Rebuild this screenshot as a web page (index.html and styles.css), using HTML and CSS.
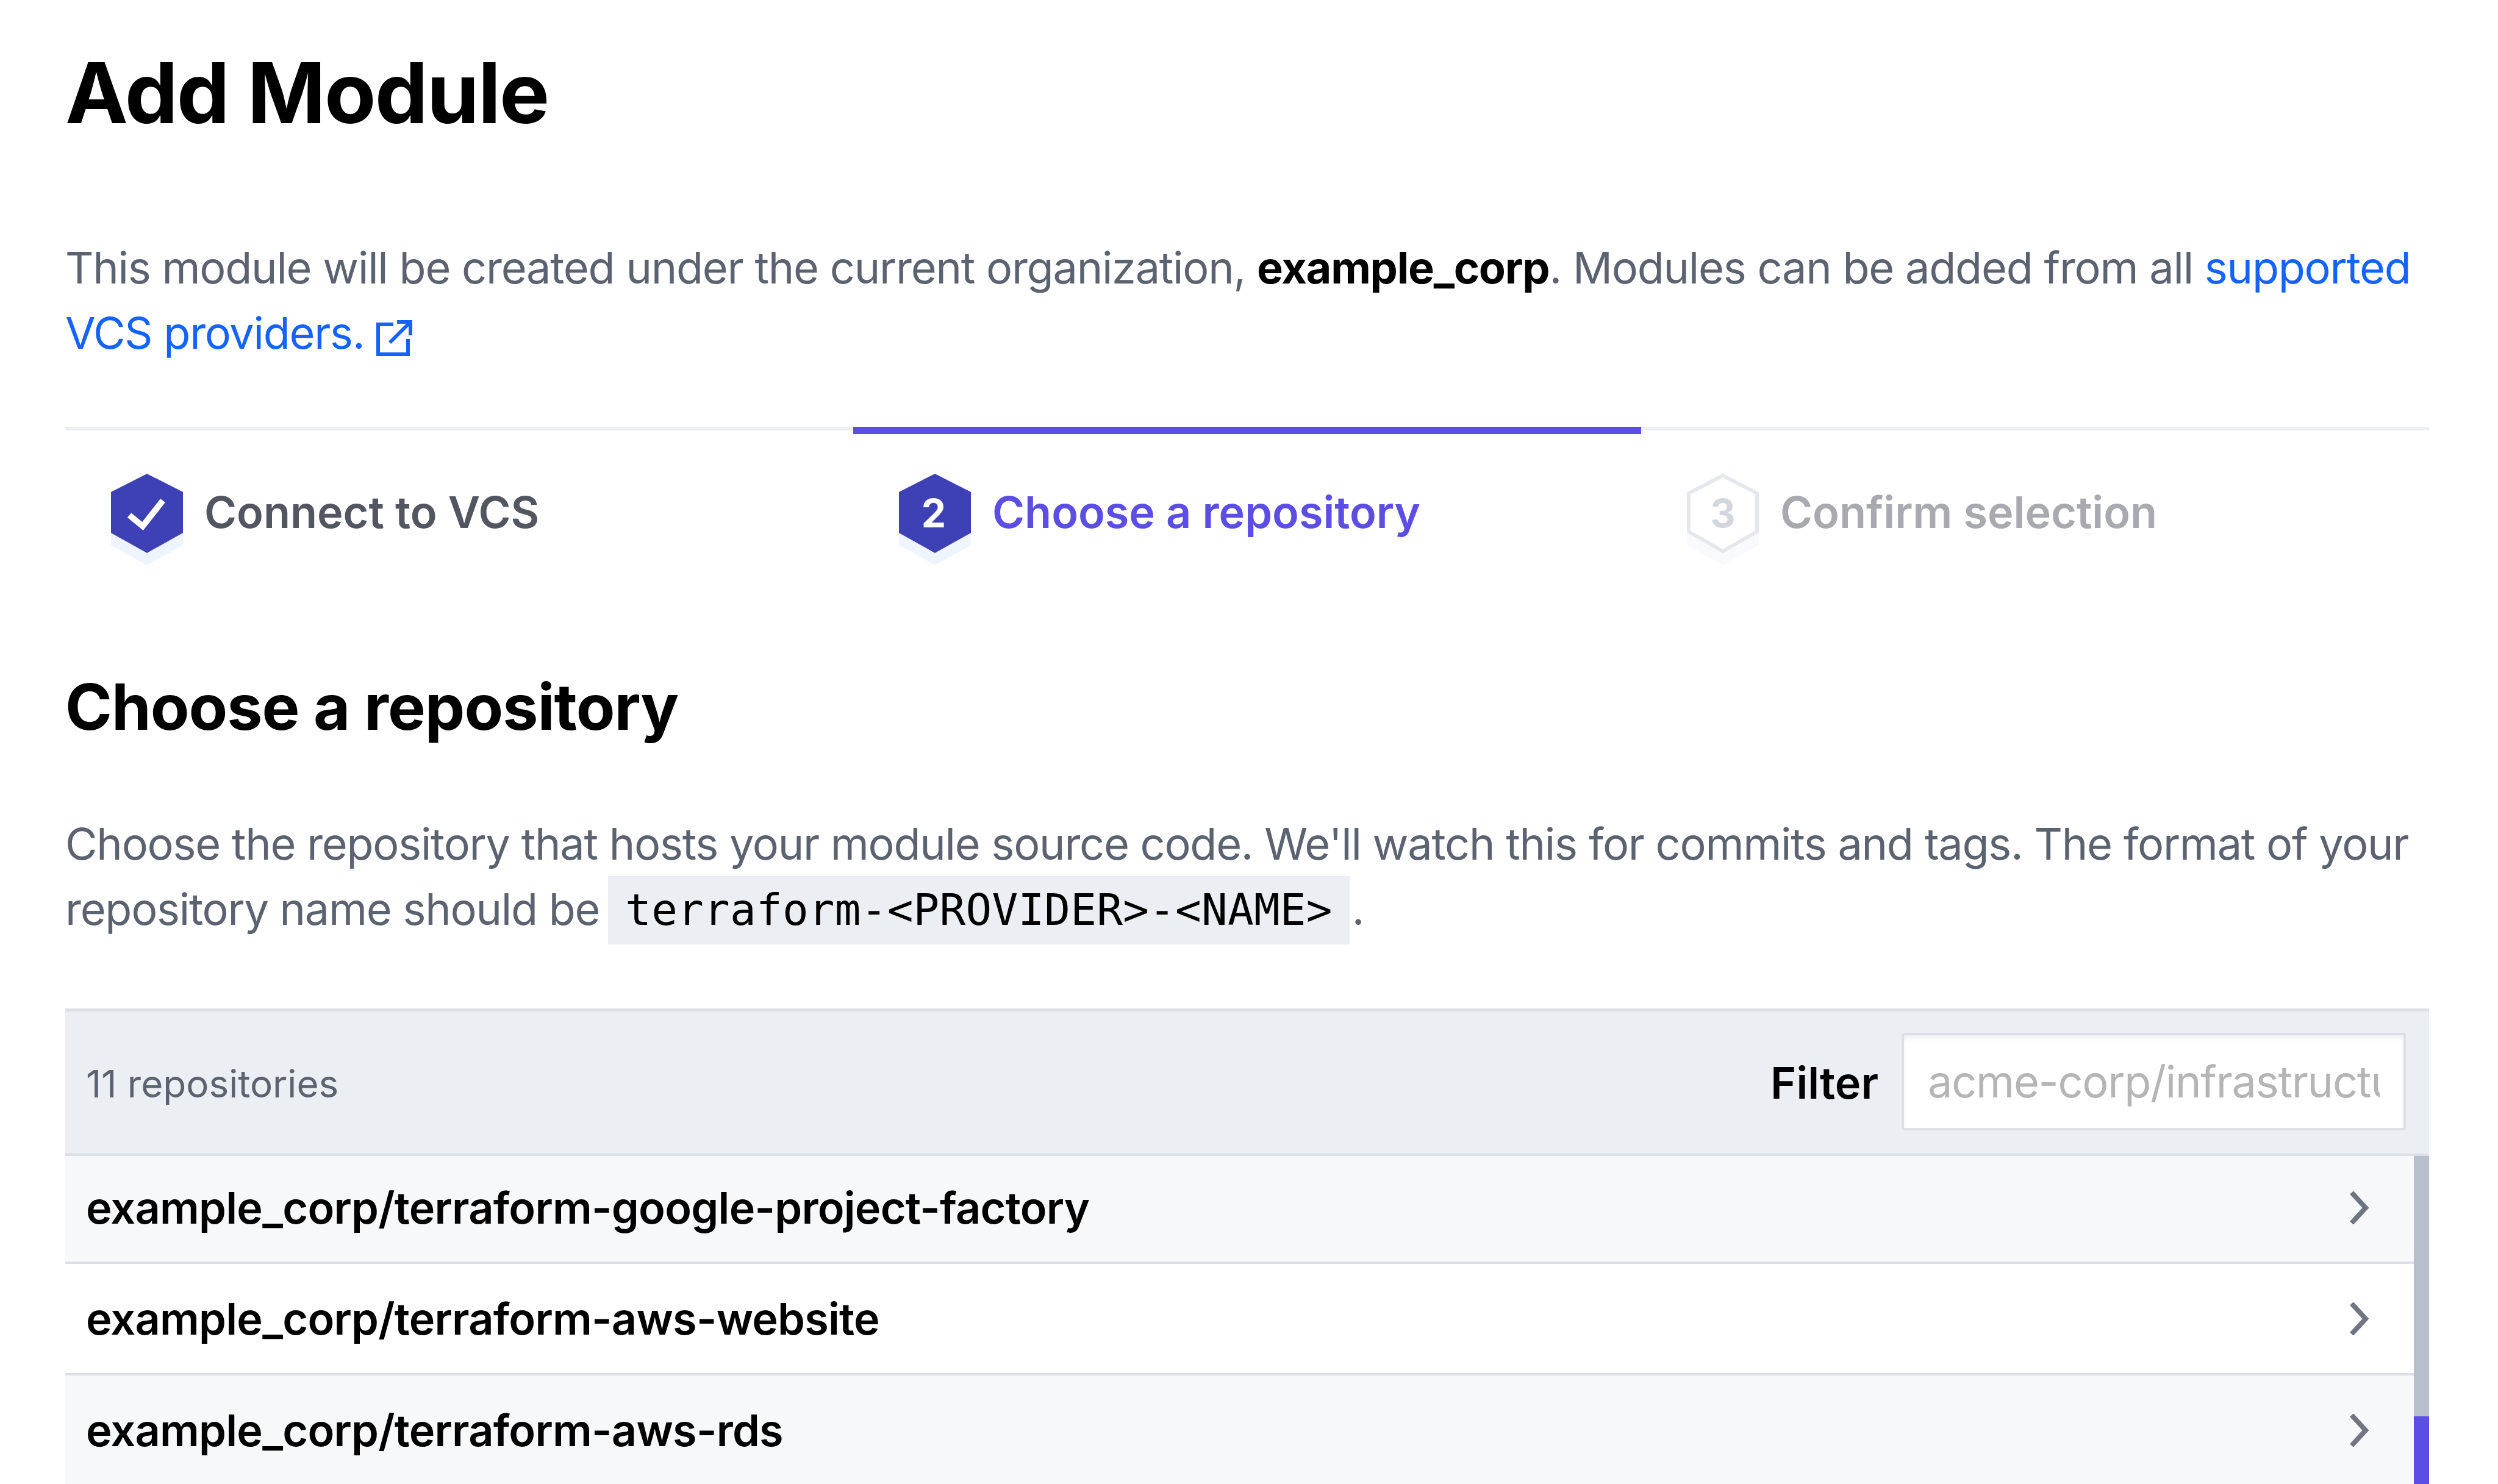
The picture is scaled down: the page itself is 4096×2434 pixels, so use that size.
FILE: index.html
```html
<!DOCTYPE html>
<html lang="en">
<head>
    <meta charset="UTF-8">
    <meta name="viewport" content="width=device-width, initial-scale=1.0">
    <title>Add Module</title>
    <link rel="stylesheet" href="styles.css">
</head>
<body>
    <div class="container">
        <h1>Add Module</h1>
        <p class="intro">This module will be created under the current organization, <strong>example_corp</strong>. Modules can be added from all <a href="#">supported VCS providers.<svg class="ext-icon" viewBox="0 0 60 60" fill="none" stroke="#1563ff" stroke-width="6"><path d="M28 8H3v49h49V32"/><path d="M22 38L55 5"/><path d="M34 4h22v22"/></svg></a></p>

        <div class="steps">
            <div class="step step-done">
                <svg class="hex" viewBox="0 0 118 150">
                    <path class="hex-shadow" d="M0 50L59 20l59 30v67l-59 33-59-33z"/>
                    <path class="hex-fill" d="M0 30L59 0l59 30v67l-59 33-59-33z"/>
                    <path d="M30 68l22 18 33-42" fill="none" stroke="#fff" stroke-width="10"/>
                </svg>
                <span class="step-label">Connect to VCS</span>
            </div>
            <div class="step step-active">
                <svg class="hex" viewBox="0 0 118 150">
                    <path class="hex-shadow" d="M0 50L59 20l59 30v67l-59 33-59-33z"/>
                    <path class="hex-fill" d="M0 30L59 0l59 30v67l-59 33-59-33z"/>
                    <text class="hex-num" x="57" y="88" fill="#fff">2</text>
                </svg>
                <span class="step-label">Choose a repository</span>
            </div>
            <div class="step step-todo">
                <svg class="hex" viewBox="0 0 118 150">
                    <path class="hex-shadow-light" d="M0 50L59 20l59 30v67l-59 33-59-33z"/>
                    <path class="hex-outline" d="M3 32L59 3l56 29v63l-56 32-56-32z"/>
                    <text class="hex-num" x="59" y="88" fill="#d3d7dd">3</text>
                </svg>
                <span class="step-label">Confirm selection</span>
            </div>
        </div>

        <h2>Choose a repository</h2>
        <p class="desc">Choose the repository that hosts your module source code. We'll watch this for commits and tags. The format of your repository name should be <code>terraform-&lt;PROVIDER&gt;-&lt;NAME&gt;</code>.</p>

        <div class="repo-table">
            <div class="repo-head">
                <span class="repo-count">11 repositories</span>
                <label class="filter-label" for="filter">Filter</label>
                <input class="filter-input" id="filter" type="text" placeholder="acme-corp/infrastructure">
            </div>
            <div class="repo-body">
                <div class="repo-list">
                    <div class="repo-row repo-row-alt">
                        <span>example_corp/terraform-google-project-factory</span>
                        <svg class="chevron" viewBox="0 0 32 54" fill="none" stroke="#6f7682" stroke-width="8"><path d="M4 2l23 25L4 52"/></svg>
                    </div>
                    <div class="repo-row">
                        <span>example_corp/terraform-aws-website</span>
                        <svg class="chevron" viewBox="0 0 32 54" fill="none" stroke="#6f7682" stroke-width="8"><path d="M4 2l23 25L4 52"/></svg>
                    </div>
                    <div class="repo-row repo-row-alt">
                        <span>example_corp/terraform-aws-rds</span>
                        <svg class="chevron" viewBox="0 0 32 54" fill="none" stroke="#6f7682" stroke-width="8"><path d="M4 2l23 25L4 52"/></svg>
                    </div>
                </div>
                <div class="scrollbar">
                    <div class="scroll-track"></div>
                    <div class="scroll-thumb"></div>
                </div>
            </div>
        </div>
    </div>
</body>
</html>
```

FILE: styles.css
```css
html, body {
    height: 2434px;
    overflow: hidden;
}

body {
    font-family: Inter, "Noto Sans", sans-serif;
    background-color: #fff;
    color: #000;
    margin: 0;
}

.container {
    padding: 72px 113px 0 107px;
}

h1 {
    margin: 0;
    font-size: 138px;
    line-height: 160px;
    font-weight: 700;
    letter-spacing: -2px;
}

.intro {
    margin: 153px 0 0;
    font-size: 72px;
    line-height: 107px;
    letter-spacing: -1.25px;
    color: #5c6370;
}

.intro strong {
    color: #000;
    font-weight: 700;
}

.intro a {
    color: #1563ff;
    text-decoration: none;
}

.ext-icon {
    width: 60px;
    height: 60px;
    margin-left: 20px;
    vertical-align: -12px;
}

.steps {
    display: grid;
    grid-template-columns: repeat(3, 1fr);
    margin-top: 101px;
    border-top: 6px solid #ebeef2;
}

.step {
    display: flex;
    align-items: flex-start;
    gap: 35px;
    height: 290px;
    padding: 65px 0 0 75px;
    box-sizing: border-box;
    margin-top: -6px;
    border-top: 12px solid transparent;
}

.step-active {
    border-top-color: #5c4ee5;
}

.hex {
    width: 118px;
    height: 150px;
    flex-shrink: 0;
}

.hex-fill {
    fill: #3e40b5;
}

.hex-shadow {
    fill: #eff5fe;
}

.hex-shadow-light {
    fill: #f8fafe;
}

.hex-outline {
    fill: #fff;
    stroke: #e4e8ed;
    stroke-width: 6;
}

.hex-num {
    font-size: 64px;
    font-weight: 700;
    text-anchor: middle;
}

.step-label {
    font-size: 72px;
    line-height: 126px;
    font-weight: 600;
}

.step-done .step-label {
    color: #525661;
}

.step-active .step-label {
    color: #5c4ee5;
}

.step-todo .step-label {
    color: #a8aab0;
}

h2 {
    margin: 104px 0 0;
    font-size: 104px;
    line-height: 130px;
    font-weight: 700;
    letter-spacing: -1px;
}

.desc {
    margin: 106px 0 0;
    font-size: 72px;
    line-height: 107px;
    letter-spacing: -1.27px;
    color: #5c6370;
}

.desc code {
    display: inline-block;
    height: 112px;
    line-height: 112px;
    margin: -4px 4px -2px -5px;
    padding: 0 28px;
    font-family: "DejaVu Sans Mono", monospace;
    font-size: 71px;
    letter-spacing: 0.2px;
    color: #000;
    background: #ebeef2;
}

.repo-table {
    margin-top: 107px;
}

.repo-head {
    display: flex;
    align-items: center;
    height: 242px;
    box-sizing: border-box;
    padding: 0 38px 0 34px;
    background: #ebeef2;
    border-top: 5px solid #dce0e6;
    border-bottom: 4px solid #dce0e6;
}

.repo-count {
    flex: 1;
    margin-top: 4px;
    font-size: 62px;
    color: #5c6370;
}

.filter-label {
    font-size: 72px;
    font-weight: 600;
    margin-right: 38px;
}

.filter-input {
    width: 827px;
    height: 160px;
    margin-top: -4px;
    box-sizing: border-box;
    padding: 0 39px;
    font-family: inherit;
    font-size: 72px;
    letter-spacing: -1.25px;
    background: #fff;
    border: 4px solid #dce0e6;
    border-radius: 5px;
    box-shadow: inset 0 5px 6px rgba(0, 0, 0, 0.06);
    outline: none;
}

.filter-input::placeholder {
    color: #b5b5b5;
    opacity: 1;
}

.repo-body {
    display: flex;
}

.repo-list {
    flex: 1;
}

.repo-row {
    display: flex;
    align-items: center;
    justify-content: space-between;
    height: 177px;
    box-sizing: border-box;
    padding: 0 74px 4px 34px;
    font-size: 72px;
    font-weight: 600;
    letter-spacing: -0.75px;
    background: #fff;
    border-bottom: 4px solid #dce0e6;
}

.repo-row + .repo-row {
    height: 183px;
    padding-bottom: 0;
}

.repo-row-alt {
    background: #f7f8fa;
}

.chevron {
    width: 32px;
    height: 54px;
}

.scrollbar {
    display: flex;
    flex-direction: column;
    width: 25px;
    height: 540px;
}

.scroll-track {
    height: 427px;
    background: #b8bfcc;
}

.scroll-thumb {
    flex: 1;
    background: #5c4ee5;
}
```
